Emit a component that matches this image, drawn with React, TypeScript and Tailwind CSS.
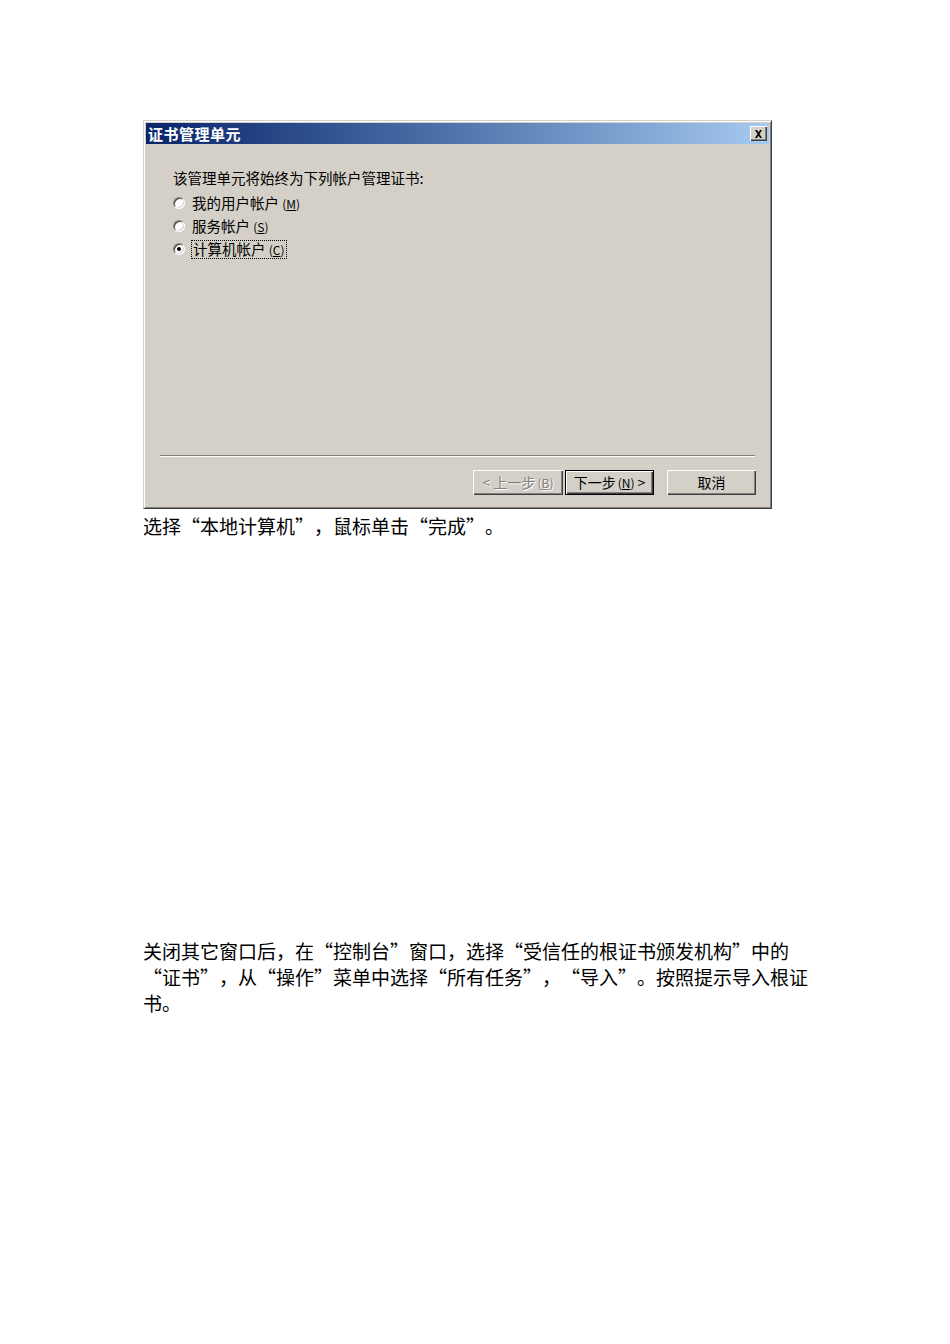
import React from "react";

function Radio({ checked }: { checked?: boolean }) {
  return (
    <span className="relative inline-flex h-[12px] w-[12px] shrink-0 items-center justify-center rounded-full border border-t-[#808080] border-l-[#808080] border-r-[#ffffff] border-b-[#ffffff] bg-white shadow-[inset_1px_1px_0_#404040,inset_-1px_-1px_0_#d4d0c8]">
      {checked && <span className="block h-[4px] w-[4px] rounded-full bg-black" />}
    </span>
  );
}

function Btn({
  children,
  disabled,
  isDefault,
  className = "",
}: {
  children: React.ReactNode;
  disabled?: boolean;
  isDefault?: boolean;
  className?: string;
}) {
  return (
    <div
      className={
        "flex h-[25px] items-center justify-center bg-[#d4d0c8] text-[14px] " +
        (isDefault
          ? "border border-black shadow-[inset_1px_1px_0_#ffffff,inset_-1px_-1px_0_#404040,inset_-2px_-2px_0_#808080] "
          : "shadow-[inset_1px_1px_0_#ffffff,inset_-1px_-1px_0_#404040,inset_-2px_-2px_0_#808080] ") +
        (disabled ? "text-[#808080] [text-shadow:1px_1px_0_#ffffff] " : "text-black ") +
        className
      }
    >
      {children}
    </div>
  );
}

export default function App() {
  return (
    <div className="min-h-[1344px] w-[950px] bg-white pl-[143px] pt-[120px] font-['Noto_Sans_CJK_SC','Liberation_Sans',sans-serif] text-black [text-spacing-trim:space-all]">
      {/* Dialog */}
      <div className="flex h-[389px] w-[629px] flex-col border border-t-[#d4d0c8] border-l-[#d4d0c8] border-r-[#404040] border-b-[#404040] bg-[#d4d0c8] p-[2px] shadow-[inset_1px_1px_0_#ffffff,inset_-1px_-1px_0_#808080]">
        {/* Title bar */}
        <div className="flex h-[21px] items-center justify-between bg-gradient-to-r from-[#0a246a] to-[#a6caf0] pl-[2px] pr-[2px]">
          <span className="text-[15px] font-bold leading-none tracking-[0.5px] text-white">证书管理单元</span>
          <div className="flex h-[15px] w-[17px] items-center justify-center bg-[#d4d0c8] shadow-[inset_1px_1px_0_#ffffff,inset_-1px_-1px_0_#404040,inset_-2px_-2px_0_#808080]">
            <svg width="9" height="8" viewBox="0 0 9 8">
              <path d="M1 0h2l1.5 2.5L6 0h2L5.5 4 8 8H6L4.5 5.5 3 8H1l2.5-4z" fill="#000" />
            </svg>
          </div>
        </div>

        {/* Content */}
        <div className="flex flex-1 flex-col pl-[25px] pt-[24px] text-[14.5px] leading-[20px]">
          <div className="pl-[2px]">该管理单元将始终为下列帐户管理证书:</div>
          <div className="mt-[5px] flex flex-col gap-[3px]">
            <div className="flex h-[20px] items-center gap-[7px] pl-[2px]">
              <Radio />
              <span>
                我的用户帐户 <span className="text-[12px]">(<span className="underline">M</span>)</span>
              </span>
            </div>
            <div className="flex h-[20px] items-center gap-[7px] pl-[2px]">
              <Radio />
              <span>
                服务帐户 <span className="text-[12px]">(<span className="underline">S</span>)</span>
              </span>
            </div>
            <div className="flex h-[20px] items-center gap-[6px] pl-[2px]">
              <Radio checked />
              <span className="border border-dotted border-black px-[1px] leading-[16px]">
                计算机帐户 <span className="text-[12px]">(<span className="underline">C</span>)</span>
              </span>
            </div>
          </div>
        </div>

        {/* Separator */}
        <div className="mx-[14px] h-[2px] border-t border-t-[#808080] border-b border-b-[#ffffff]" />

        {/* Buttons */}
        <div className="flex justify-end pb-[11px] pr-[13px] pt-[13px]">
          <Btn disabled className="w-[90px]">
            &lt; 上一步 <span className="ml-[2px] text-[12px]">(<span className="underline">B</span>)</span>
          </Btn>
          <Btn isDefault className="ml-[2px] w-[89px]">
            下一步 <span className="ml-[2px] text-[12px]">(<span className="underline">N</span>)</span>&nbsp;&gt;
          </Btn>
          <Btn className="ml-[13px] w-[89px]">取消</Btn>
        </div>
      </div>

      {/* Document text */}
      <div className="mt-[4px] text-[19px] leading-[26px]">选择“本地计算机”，鼠标单击“完成”。</div>

      <div className="mt-[399px] w-[680px] text-[19px] leading-[26px]">
        <div>关闭其它窗口后，在“控制台”窗口，选择“受信任的根证书颁发机构”中的</div>
        <div>“证书”，从“操作”菜单中选择“所有任务”，“导入”。按照提示导入根证</div>
        <div>书。</div>
      </div>
    </div>
  );
}
